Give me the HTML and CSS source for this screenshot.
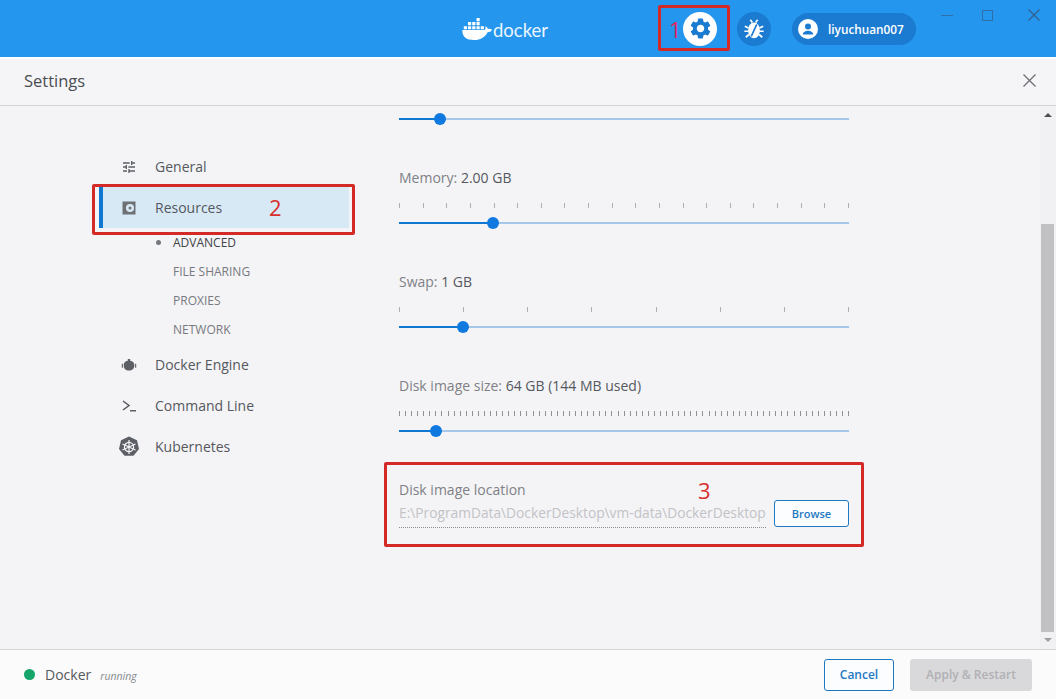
FILE: index.html
```html
<!DOCTYPE html>
<html lang="en">
<head>
  <meta charset="UTF-8">
  <title>Docker Settings</title>
  <link rel="stylesheet" href="styles.css">
</head>

<body>
  <header class="topbar">
    <div class="logo">
      <svg class="whale" viewBox="0 0 30 22">
        <path d="M14.500 0h3.200v3.200h-3.200zM6 4h3.200v3.200H6zM10.200 4h3.200v3.200h-3.200zM14.500 4h3.200v3.200h-3.200zM1.800 8.200H5v3H1.800zM6 8.200h3.200v3H6zM10.200 8.200h3.200v3h-3.200zM14.500 8.200h3.200v3h-3.200zM18.700 8.200h3.200v3h-3.200z"/>
        <path d="M.3 12h21.900c1-.1 1.500-.9 1.300-3.700 1.400.5 2.200 1.600 2.400 2.700 1.300-.4 2.700-.2 4.100.7-.9 1.800-2.500 2.500-4.400 2.500C23.600 18.500 19 22 12 22 4.500 22 .2 19 .3 12z"/>
      </svg>
      <span class="logo-text">docker</span>
    </div>
    <button class="round-btn round-btn-light">
      <svg class="gear" viewBox="0 0 24 24"><path d="M19.14 12.94c.04-.3.06-.61.06-.94 0-.32-.02-.64-.07-.94l2.03-1.58a.49.49 0 0 0 .12-.61l-1.920-3.320a.49.49 0 0 0-.59-.22l-2.390.96c-.5-.38-1.030-.7-1.620-.94l-.36-2.540a.48.48 0 0 0-.48-.41h-3.840c-.24 0-.43.17-.47.41l-.36 2.540c-.59.24-1.130.57-1.620.94l-2.390-.96c-.22-.08-.47 0-.59.22L2.740 8.870c-.12.21-.08.47.12.61l2.030 1.580c-.05.3-.09.63-.09.94s.02.64.07.94l-2.030 1.580a.49.49 0 0 0-.12.61l1.920 3.320c.12.22.37.29.59.22l2.390-.96c.5.38 1.030.7 1.620.94l.36 2.540c.05.24.24.41.48.41h3.840c.24 0 .44-.17.47-.41l.36-2.540c.59-.24 1.130-.56 1.620-.94l2.390.96c.22.08.47 0 .59-.22l1.920-3.320c.12-.22.07-.47-.12-.61l-2.010-1.580zM12 15.600c-1.980 0-3.600-1.620-3.600-3.600s1.620-3.600 3.600-3.600 3.600 1.620 3.600 3.600-1.620 3.600-3.600 3.600z"/></svg>
    </button>
    <button class="round-btn round-btn-dark">
      <svg class="bug" viewBox="0 0 24 24">
        <path d="M8 2l2.200 3M16 2l-2.200 3M2 9l4 2M22 9l-4 2M1.500 14.500H6M22.500 14.500H18M3 21l3.500-3M21 21l-3.500-3" fill="none" stroke="#fff" stroke-width="1.800"/>
        <ellipse cx="12" cy="13.500" rx="6.500" ry="8.500" fill="#fff"/>
        <path d="M15 7L9 20" fill="none" stroke="#1b7bd0" stroke-width="1.800"/>
      </svg>
    </button>
    <div class="user-pill">
      <svg class="avatar" viewBox="0 0 20 20">
        <circle cx="10" cy="10" r="10" fill="#fff"/>
        <circle cx="10" cy="7.500" r="3" fill="#1b7bd0"/>
        <path d="M4.800 15.500c0-2.600 3-3.800 5.200-3.800s5.200 1.200 5.200 3.800z" fill="#1b7bd0"/>
      </svg>
      <span>liyuchuan007</span>
    </div>
    <div class="window-controls">
      <span class="win-min"></span>
      <span class="win-max"></span>
      <svg class="win-close" viewBox="0 0 12 12"><path d="M.5.5l11 11M11.500.5l-11 11"/></svg>
    </div>
  </header>

  <div class="settings">
    <div class="settings-head">
      <h1>Settings</h1>
      <svg class="close-icon" viewBox="0 0 13 13"><path d="M.5.5l12 12M12.500.5l-12 12"/></svg>
    </div>

    <div class="settings-body">
      <nav class="sidebar">
        <a class="nav-item">
          <svg class="nav-icon" viewBox="0 0 24 24"><path d="M3 17v2h6v-2H3zM3 5v2h10V5H3zm10 16v-2h8v-2h-8v-2h-2v6h2zM7 9v2H3v2h4v2h2V9H7zm14 4v-2H11v2h10zm-6-4h2V7h4V5h-4V3h-2v6z"/></svg>
          General
        </a>
        <a class="nav-item nav-item-active">
          <svg class="nav-icon nav-icon-res" viewBox="0 0 16 16"><path fill-rule="evenodd" d="M1.500 1.500h13v13h-13zM9 4a4 4 0 1 0 0 8 4 4 0 0 0 0-8zM9 6.500a1.500 1.500 0 1 1 0 3 1.500 1.500 0 0 1 0-3z"/></svg>
          Resources
        </a>
        <div class="subnav">
          <a class="sub-item sub-item-active">Advanced</a>
          <a class="sub-item">File sharing</a>
          <a class="sub-item">Proxies</a>
          <a class="sub-item">Network</a>
        </div>
        <a class="nav-item">
          <svg class="nav-icon" viewBox="0 0 16 16"><path d="M6.800 2h2.400v1.700C12 4 13.300 5.500 13.300 8.500c0 3-2 5-5.300 5s-5.300-2-5.300-5c0-3 1.300-4.500 4.100-4.800zM.8 6.700h1.100v4H.8zM14.100 6.700h1.100v4h-1.100z"/></svg>
          Docker Engine
        </a>
        <a class="nav-item">
          <svg class="nav-icon" viewBox="0 0 16 16"><path d="M2 3l6 4.500L2 12" fill="none" stroke="#55585e" stroke-width="1.500"/><path d="M9 12h6v1.500H9z"/></svg>
          Command Line
        </a>
        <a class="nav-item">
          <svg class="nav-icon nav-icon-k8s" viewBox="0 0 22 22">
            <path d="M11 .5l8 3.800 2 8.600-5.500 6.900h-9L1 12.900l2-8.600z"/>
            <g fill="none" stroke="#f4f4f6" stroke-width="1.200">
              <circle cx="11" cy="11" r="4.600"/>
              <path d="M11 4v14M4.500 8l13 6M17.500 8l-13 6"/>
            </g>
          </svg>
          Kubernetes
        </a>
      </nav>

      <main class="content">
        <div class="setting">
          <div class="slider">
            <div class="slider-fill" style="width: 41px"></div>
            <div class="slider-thumb" style="left: 41px"></div>
          </div>
        </div>
        <div class="setting">
          <label class="setting-label">Memory: <b>2.00 GB</b></label>
          <div class="ticks ticks-memory"></div>
          <div class="slider">
            <div class="slider-fill" style="width: 94px"></div>
            <div class="slider-thumb" style="left: 94px"></div>
          </div>
        </div>
        <div class="setting">
          <label class="setting-label">Swap: <b>1 GB</b></label>
          <div class="ticks ticks-swap"></div>
          <div class="slider">
            <div class="slider-fill" style="width: 64px"></div>
            <div class="slider-thumb" style="left: 64px"></div>
          </div>
        </div>
        <div class="setting">
          <label class="setting-label">Disk image size: <b>64 GB (144 MB used)</b></label>
          <div class="ticks ticks-disk"></div>
          <div class="slider">
            <div class="slider-fill" style="width: 37px"></div>
            <div class="slider-thumb" style="left: 37px"></div>
          </div>
        </div>
        <div class="setting">
          <label class="setting-label">Disk image location</label>
          <div class="location-row">
            <div class="location-path">E:\ProgramData\DockerDesktop\vm-data\DockerDesktop</div>
            <button class="btn btn-outline btn-browse">Browse</button>
          </div>
        </div>
      </main>

      <div class="scrollbar">
        <span class="arrow-up"></span>
        <div class="scroll-track"><div class="scroll-thumb"></div></div>
        <span class="arrow-down"></span>
      </div>
    </div>

    <footer class="statusbar">
      <span class="status-dot"></span>
      <span class="status-name">Docker</span>
      <span class="status-state">running</span>
      <button class="btn btn-outline btn-cancel">Cancel</button>
      <button class="btn btn-disabled">Apply &amp; Restart</button>
    </footer>
  </div>

  <!-- red notes drawn on top of the screenshot -->
  <div class="note note-1"><span class="note-num">1</span></div>
  <div class="note note-2"><span class="note-num">2</span></div>
  <div class="note note-3"><span class="note-num">3</span></div>
</body>
</html>
```

FILE: styles.css
```css
* {
  margin: 0;
  padding: 0;
  box-sizing: border-box;
  font-family: 'Open Sans', sans-serif;
}

body {
  width: 1056px;
  height: 699px;
  overflow: hidden;
  position: relative;
  background: #fff;
}

button {
  border: none;
  background: none;
}

/* top bar */
.topbar {
  display: flex;
  align-items: center;
  height: 57px;
  background: #2496ed;
  padding-left: 462px;
}

.logo {
  display: flex;
  align-items: center;
  width: 86px;
  gap: 1px;
  margin-top: 1px;
}

.whale {
  width: 30px;
  height: 22px;
  fill: #fff;
  flex: none;
}

.logo-text {
  font-family: 'Lato', sans-serif;
  font-size: 18.500px;
  color: #eaf5fe;
  line-height: 1;
  margin-top: 3px;
}

.round-btn {
  width: 34px;
  height: 34px;
  border-radius: 50%;
  display: flex;
  align-items: center;
  justify-content: center;
}

.round-btn-light {
  background: #fff;
  margin-left: 135px;
}

.round-btn-dark {
  background: #1b7bd0;
  margin-left: 20px;
}

.gear {
  width: 25px;
  height: 25px;
  fill: #1b7bd0;
}

.bug {
  width: 22px;
  height: 22px;
}

.user-pill {
  display: flex;
  align-items: center;
  gap: 10px;
  width: 124px;
  height: 32px;
  margin-left: 21px;
  padding-left: 6px;
  border-radius: 16px;
  background: #1b7bd0;
  color: #fff;
  font-size: 11.800px;
  font-weight: 600;
}

.avatar {
  width: 20px;
  height: 20px;
}

.window-controls {
  display: flex;
  align-items: center;
  align-self: flex-start;
  margin-left: 25px;
  height: 30px;
}

.win-min {
  width: 12px;
  height: 1px;
  background: #2f6ea8;
}

.win-max {
  width: 11px;
  height: 11px;
  margin-left: 29px;
  border: 1px solid #2f6ea8;
}

.win-close {
  width: 12px;
  height: 12px;
  margin-left: 35px;
  fill: none;
  stroke: #33618c;
  stroke-width: 1.2;
}

/* settings panel */
.settings {
  margin-top: 2px;
  height: 640px;
  display: flex;
  flex-direction: column;
}

.settings-head {
  display: flex;
  align-items: center;
  justify-content: space-between;
  height: 47px;
  padding: 0 20px 3px 24px;
  background: #f5f5f7;
  border-bottom: 1px solid #d5d5d7;
}

.settings-head h1 {
  font-size: 16.500px;
  font-weight: 400;
  color: #4a4d52;
}

.close-icon {
  width: 13px;
  height: 13px;
  fill: none;
  stroke: #6d6f74;
  stroke-width: 1.3;
}

.settings-body {
  flex: 1;
  display: flex;
  background: #f4f4f6;
  min-height: 0;
}

/* sidebar */
.sidebar {
  width: 399px;
  flex: none;
  padding: 40px 0 0 99px;
}

.nav-item {
  display: flex;
  align-items: center;
  width: 250px;
  height: 41px;
  padding-left: 18px;
  border-left: 4px solid transparent;
  font-size: 14px;
  color: #55585e;
}

.nav-item-active {
  background: #d8e9f6;
  border-left-color: #0f79d2;
}

.nav-icon {
  width: 16px;
  height: 16px;
  margin-right: 18px;
  flex: none;
  fill: #5c5f65;
}

.nav-icon-res {
  fill: #6e7176;
}

.nav-icon-k8s {
  width: 22px;
  height: 22px;
  margin: 0 15px 0 -3px;
}

.subnav {
  padding-left: 74px;
}

.sub-item {
  display: flex;
  align-items: center;
  height: 29px;
  font-size: 12px;
  text-transform: uppercase;
  color: #77797e;
  position: relative;
}

.sub-item-active {
  color: #3f4246;
}

.sub-item-active::before {
  content: "";
  position: absolute;
  left: -17px;
  top: 12px;
  width: 5px;
  height: 5px;
  border-radius: 50%;
  background: #74777c;
}

/* sliders */
.content {
  flex: 1;
  padding-top: 7px;
}

.setting {
  width: 450px;
  margin-bottom: 43px;
}

.setting-label {
  display: block;
  height: 20px;
  line-height: 20px;
  font-size: 14px;
  color: #7f8186;
}

.setting-label b {
  font-weight: 400;
  color: #55585e;
}

.ticks {
  height: 5px;
  margin-top: 15px;
}

.ticks-memory {
  background: repeating-linear-gradient(90deg, #b0b0b4 0, #b0b0b4 1px, transparent 1px, transparent 23.630px);
}

.ticks-swap {
  background: repeating-linear-gradient(90deg, #b0b0b4 0, #b0b0b4 1px, transparent 1px, transparent 64.140px);
}

.ticks-disk {
  background: repeating-linear-gradient(90deg, #909095 0, #909095 1px, transparent 1px, transparent 6.070px);
}

.slider {
  position: relative;
  height: 12px;
}

.ticks + .slider {
  margin-top: 9px;
}

.slider::before {
  content: "";
  position: absolute;
  left: 0;
  right: 0;
  top: 5px;
  height: 2px;
  background: #a6c7e8;
}

.slider-fill {
  position: absolute;
  left: 0;
  top: 5px;
  height: 2px;
  background: #0f79d2;
}

.slider-thumb {
  position: absolute;
  top: 0;
  width: 12px;
  height: 12px;
  margin-left: -6px;
  border-radius: 50%;
  background: #0f79e0;
}

.location-row {
  display: flex;
  align-items: flex-start;
  gap: 8px;
}

.location-path {
  width: 367px;
  height: 28px;
  line-height: 26px;
  font-size: 13.750px;
  color: #c2c2c7;
  white-space: nowrap;
  border-bottom: 1px dotted #8e8e92;
}

/* buttons */
.btn {
  font-size: 12px;
  font-weight: 600;
  border-radius: 3px;
}

.btn-outline {
  border: 1px solid #1e78c2;
  color: #1e78c2;
  background: #fbfdff;
}

.btn-browse {
  width: 75px;
  height: 27px;
  font-size: 11px;
}

.btn-cancel {
  width: 70px;
  height: 32px;
  margin-left: auto;
}

.btn-disabled {
  width: 122px;
  height: 32px;
  margin-left: 16px;
  background: #d9d9db;
  color: #b0b0b4;
}

/* scrollbar */
.scrollbar {
  width: 16px;
  flex: none;
  display: flex;
  flex-direction: column;
  align-items: center;
  background: #f1f1f3;
  margin-left: auto;
}

.scroll-track {
  flex: 1;
  width: 100%;
  padding: 101px 2px 0 1px;
}

.scroll-thumb {
  height: 408px;
  background: #c1c1c3;
}

.arrow-up,
.arrow-down {
  flex: none;
  width: 0;
  height: 0;
  border-left: 4px solid transparent;
  border-right: 4px solid transparent;
}

.arrow-up {
  margin-top: 7px;
  margin-bottom: 6px;
  border-bottom: 4px solid #505050;
}

.arrow-down {
  margin-top: 6px;
  margin-bottom: 7px;
  border-top: 4px solid #a0a0a0;
}

/* footer */
.statusbar {
  display: flex;
  align-items: center;
  height: 50px;
  flex: none;
  padding: 0 24px;
  background: #fbfbfb;
  border-top: 1px solid #d5d5d7;
}

.status-dot {
  width: 11px;
  height: 11px;
  border-radius: 50%;
  background: #14a56a;
}

.status-name {
  margin-left: 10px;
  font-size: 14px;
  color: #55585e;
}

.status-state {
  margin-left: 9px;
  margin-top: 2px;
  font-size: 10.500px;
  font-style: italic;
  color: #85878c;
}

/* red notes */
.note {
  position: absolute;
  border: 3px solid #d32a27;
  border-radius: 2px;
}

.note-num {
  position: absolute;
  font-size: 22px;
  line-height: 16px;
  color: #d8302c;
}

.note-1 {
  left: 658px;
  top: 5px;
  width: 72px;
  height: 46px;
}

.note-1 .note-num {
  left: 8px;
  top: 13px;
  color: #e0245c;
}

.note-2 {
  left: 92px;
  top: 184px;
  width: 263px;
  height: 51px;
}

.note-2 .note-num {
  left: 174px;
  top: 12px;
}

.note-3 {
  left: 384px;
  top: 462px;
  width: 480px;
  height: 85px;
}

.note-3 .note-num {
  left: 311px;
  top: 17px;
}
```
